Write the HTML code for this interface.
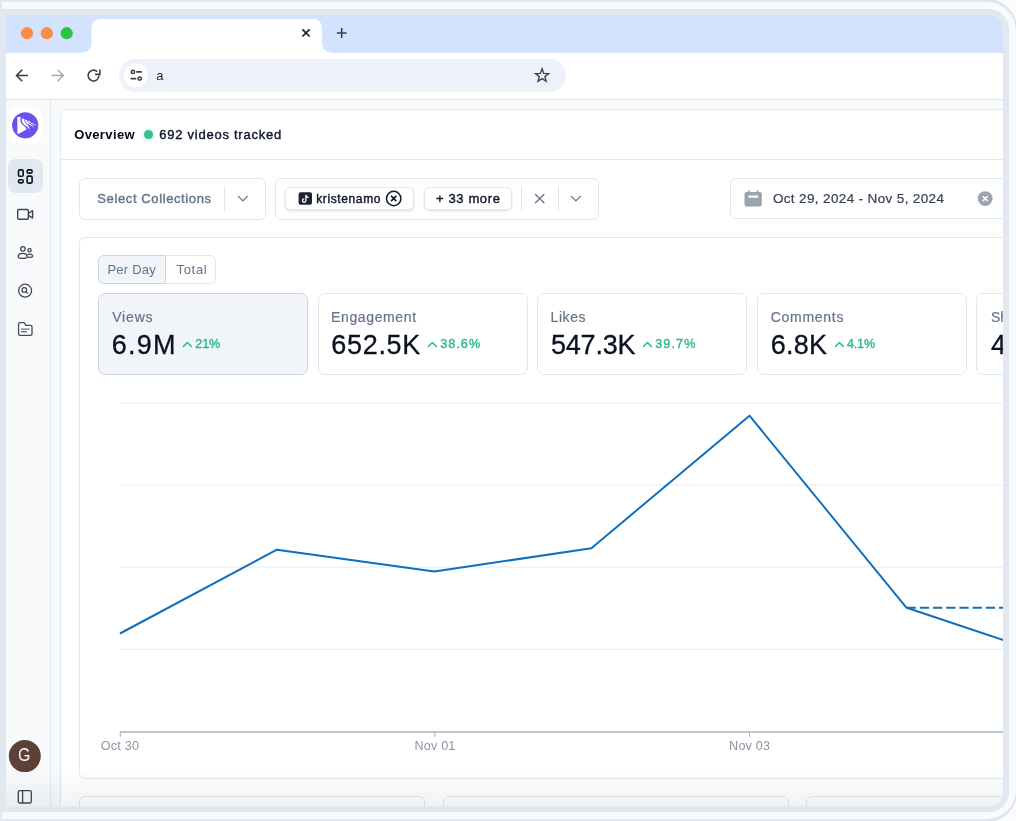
<!DOCTYPE html>
<html lang="en">
<head>
<meta charset="utf-8">
<title>Overview</title>
<style>
*{box-sizing:border-box;margin:0;padding:0}
html,body{width:1016px;height:821px;overflow:hidden;background:#fafbfc}
body{font-family:"Liberation Sans",Arial,sans-serif;position:relative;color:#0f172a}
.abs{position:absolute}
.t{position:absolute;white-space:nowrap;line-height:1}
#outer{position:absolute;left:0;top:0;width:1016px;height:821px;background:#f8fafc;border:2px solid #e2e8f0;border-right:0;border-radius:0 30px 30px 0;box-shadow:0 0 0 1px rgba(148,163,184,.35)}
#frame{position:absolute;left:0;top:9px;width:1009px;height:803px;background:#e2e8f0;border-radius:0 20px 20px 0}
#win{position:absolute;left:6px;top:15px;width:997px;height:791px;background:#f8fafc;border-radius:0 14px 14px 0;overflow:hidden}
/* everything inside #win positioned relative to page by offsetting */
#page{position:absolute;left:-6px;top:-15px;width:1016px;height:821px;will-change:transform}
#tabstrip{left:6px;top:15px;width:997px;height:37.5px;background:#d3e3fd}
#toolbar{left:6px;top:52.5px;width:997px;height:47.5px;background:#fff;border-bottom:1.5px solid #dcdfe4}
#pill{left:119.3px;top:58.6px;width:446.8px;height:33.4px;border-radius:17px;background:#edf1f9}
#sidebar{left:6px;top:100px;width:45px;height:706px;background:#f8fafc;border-right:1px solid #e2e8f0}
#main{left:60px;top:109px;width:960px;height:720px;background:#fff;border:1px solid #e2e8f0;border-radius:7px 0 0 0}
.box{position:absolute;background:#fff;border:1px solid #e2e8f0;border-radius:6px}
.chip{position:absolute;background:#fff;border:1px solid #e2e8f0;border-radius:5px;box-shadow:0 1px 2.5px rgba(15,23,42,.14)}
.vdiv{position:absolute;width:1px;background:#e2e8f0}
.card{position:absolute;top:293.3px;width:210.2px;height:81.4px;background:#fff;border:1px solid #e2e8f0;border-radius:7px}
.lab{font-size:14px;color:#64748b;-webkit-text-stroke:.2px currentColor}
.num{font-size:27px;color:#0b1120;-webkit-text-stroke:.3px currentColor}
.med{-webkit-text-stroke:.4px currentColor}
.pct{font-size:12.6px;color:#2fb984;-webkit-text-stroke:.38px currentColor}
</style>
</head>
<body>
<div id="outer"></div>
<div id="frame"></div>
<div id="win"><div id="page">

<!-- browser chrome -->
<div id="tabstrip" class="abs"></div>
<div id="toolbar" class="abs"></div>
<div id="pill" class="abs"></div>

<svg class="abs" style="left:0;top:0" width="1016" height="821" viewBox="0 0 1016 821" fill="none">
  <!-- tab -->
  <path d="M81.5 53 L81.5 52.5 Q91.5 52.5 91.5 42.5 L91.5 28.5 Q91.5 19 101 19 L312.5 19 Q322 19 322 28.5 L322 42.5 Q322 52.5 332.5 52.5 L332.5 53 Z" fill="#fff"/>
  <circle cx="27" cy="33.2" r="6.1" fill="#fb8c46"/>
  <circle cx="46.9" cy="33.2" r="6.1" fill="#fb8c46"/>
  <circle cx="66.7" cy="33.2" r="6.1" fill="#29c440"/>
  <!-- tab close / new tab -->
  <path d="M302.4 29.3 L309.6 36.5 M309.6 29.3 L302.4 36.5" stroke="#1f1f1f" stroke-width="1.7"/>
  <path d="M336.8 33 H346.6 M341.7 28.1 V37.9" stroke="#3c4043" stroke-width="1.6"/>
  <!-- back -->
  <path d="M28 75.5 H17.2 M22.2 69.8 L16.5 75.5 L22.2 81.2" stroke="#3c4043" stroke-width="1.6" stroke-linejoin="miter"/>
  <!-- forward -->
  <path d="M51.6 75.5 H62.6 M57.6 69.8 L63.3 75.5 L57.6 81.2" stroke="#a3a9b0" stroke-width="1.5"/>
  <!-- reload -->
  <path d="M98.9 75.6 A5.4 5.4 0 1 1 97.2 71.6" stroke="#3c4043" stroke-width="1.6"/>
  <path d="M99.9 69.6 V74.4 H95.1" stroke="#3c4043" stroke-width="1.6"/>
  <!-- site info -->
  <circle cx="135.9" cy="75.4" r="12" fill="#fff"/>
  <circle cx="132.9" cy="71.9" r="1.65" stroke="#3c4043" stroke-width="1.6"/>
  <path d="M136.2 71.9 H141.8 M130.6 78.6 H136.3" stroke="#3c4043" stroke-width="1.7"/>
  <circle cx="139.7" cy="78.6" r="1.65" stroke="#3c4043" stroke-width="1.6"/>
  <!-- star -->
  <path d="M542.1 68.8 L543.8 73.4 L548.7 73.6 L544.9 76.6 L546.2 81.3 L542.1 78.6 L538.0 81.3 L539.3 76.6 L535.5 73.6 L540.4 73.4 Z" stroke="#3c4043" stroke-width="1.35" stroke-linejoin="miter"/>
</svg>
<div class="t" style="left:156.2px;top:69px;font-size:13px;color:#1f1f1f">a</div>

<!-- app -->
<div id="sidebar" class="abs"></div>

<div class="abs" style="left:8px;top:108px;width:35px;height:35px;background:#fff;border-radius:9px"></div>
<div class="abs" style="left:8px;top:159px;width:35px;height:34px;background:#e2e8f0;border-radius:8px"></div>
<svg class="abs" style="left:0;top:0" width="60" height="821" viewBox="0 0 60 821" fill="none">
  <!-- logo -->
  <circle cx="25.2" cy="125.3" r="13.1" fill="#6a53ec"/>
  <path d="M17.4 117 L20.8 117 C19.6 120.4 20.6 123.4 23.2 125.2 L26.1 127.9 C26.7 128.5 26.6 129.3 26 129.7 L18.3 134.1 L17.4 133.7 Z" fill="#fff"/>
  <g fill="#fff">
    <path d="M22 118.4 C21.2 121.6 23.2 124.2 26 125.9 C27.8 127 28.8 128.2 29.3 129.9 C29.8 128 29 126.2 27.4 125 C25.2 123.4 23.8 121.4 24.3 119 Z"/>
    <path d="M25 119.4 C24.6 121.8 26.6 123.6 29.4 124.8 C31.4 125.7 32.8 126.4 33.9 127.6 C33.6 126 32.4 125 30.6 124.2 C28.4 123.2 27 122 27.1 120.2 Z"/>
    <path d="M27.8 120.5 C27.8 122.2 29.6 123.2 32 123.9 C34 124.5 35.4 124.9 36.6 125.8 C36 124.6 34.8 124 33 123.4 C31 122.8 29.6 122.2 29.4 121 Z"/>
  </g>
  <!-- dashboard -->
  <g stroke="#0b1120" stroke-width="1.6">
    <rect x="18.5" y="169.9" width="4.7" height="6.3" rx="1.3"/>
    <rect x="18.5" y="179.7" width="4.7" height="3.2" rx="1.3"/>
    <rect x="27.1" y="169.9" width="5" height="3.2" rx="1.3"/>
    <rect x="27.1" y="176.1" width="5" height="7" rx="1.3"/>
  </g>
  <!-- video -->
  <g stroke="#404650" stroke-width="1.4" stroke-linejoin="round">
    <rect x="17.7" y="209.5" width="10.6" height="9.7" rx=".9"/>
    <path d="M28.5 213.4 L32.6 210.7 V218.1 L28.5 215.4"/>
  </g>
  <!-- users -->
  <g stroke="#404650" stroke-width="1.3">
    <circle cx="22.9" cy="248.8" r="2.25"/>
    <path d="M18.2 256.8 C18.2 252.1 27.2 252.1 27.2 256.8 C27.2 259 18.2 259 18.2 256.8 Z"/>
    <circle cx="29.5" cy="250.3" r="1.65"/>
    <path d="M27.7 254.6 C29.5 253.5 32.6 254.2 32.6 256.2 C32.6 257.6 29.2 257.5 27.7 257.2"/>
  </g>
  <!-- search circle -->
  <g stroke="#404650" stroke-width="1.25">
    <circle cx="25.1" cy="290.7" r="6.5"/>
    <circle cx="24.3" cy="289.9" r="2.3"/>
    <path d="M26 291.6 L28 293.6"/>
  </g>
  <!-- folder -->
  <g stroke="#454b55" stroke-width="1.3" stroke-linejoin="round">
    <path d="M18.6 334.1 V323.9 Q18.6 322.6 19.9 322.6 H23.6 Q24.4 322.6 24.8 323.4 L25.7 325.4 H30.7 Q32 325.4 32 326.7 V334.1 Q32 335.4 30.7 335.4 H19.9 Q18.6 335.4 18.6 334.1 Z" fill="#fff"/>
    <path d="M21 329.1 H29.6 M21 331.7 H26.8" stroke-width="1.4" stroke="#6b7280"/>
  </g>
  <!-- avatar -->
  <circle cx="24.8" cy="756.1" r="16" fill="#5d4037"/>
  <!-- panel icon -->
  <g stroke="#404650" stroke-width="1.3">
    <rect x="18.3" y="790.6" width="13" height="12.4" rx="1.6"/>
    <path d="M22.6 790.6 V803"/>
  </g>
</svg>
<div class="t" style="left:18px;top:747.4px;font-size:17.5px;color:#fff;transform:scaleX(.9);transform-origin:0 0">G</div>
<div id="main" class="abs"></div>

<!-- header -->
<div class="abs" style="left:61px;top:159px;width:960px;height:1px;background:#e2e8f0"></div>
<div class="t" id="t1" style="color:#020617;left:74.20px;top:128.00px;font-size:13px;font-weight:bold;letter-spacing:0.37px">Overview</div>
<div class="abs" style="left:141.4px;top:127.5px;width:14px;height:14px;border-radius:50%;background:#f1f5f9"></div>
<div class="abs" style="left:144.1px;top:130.2px;width:8.6px;height:8.6px;border-radius:50%;background:#3ac08a"></div>
<div class="t med" id="t2" style="left:159.26px;top:128.00px;font-size:13px;letter-spacing:0.75px">692 videos tracked</div>

<!-- filters -->
<div class="box" style="left:79px;top:178px;width:187px;height:42px"></div>
<div class="t med" id="t3" style="left:97.32px;top:191.50px;font-size:13px;color:#64748b;letter-spacing:0.61px">Select Collections</div>
<div class="vdiv" style="left:224px;top:186.3px;height:24.7px"></div>
<div class="box" style="left:274.5px;top:178px;width:324.5px;height:42px"></div>
<div class="chip" style="left:284.5px;top:187.1px;width:129.5px;height:22.8px"></div>
<div class="t med" id="t4" style="left:316.24px;top:192.50px;font-size:12px;color:#0f172a;letter-spacing:0.61px">kristenamo</div>
<div class="chip" style="left:423.5px;top:187.1px;width:88.5px;height:22.8px"></div>
<div class="t med" id="t5" style="left:435.92px;top:191.50px;font-size:13px;color:#0f172a;letter-spacing:0.64px">+ 33 more</div>
<div class="vdiv" style="left:521px;top:186.3px;height:24.7px"></div>
<div class="vdiv" style="left:557.5px;top:186.3px;height:24.7px"></div>
<div class="box" style="left:730px;top:178px;width:300px;height:41px"></div>
<div class="t" id="t6" style="-webkit-text-stroke:.2px currentColor;left:772.89px;top:192.10px;font-size:13.5px;color:#374151;letter-spacing:0.36px">Oct 29, 2024 - Nov 5, 2024</div>

<!-- chart panel -->
<div class="box" style="left:79px;top:237px;width:960px;height:541.5px"></div>
<div class="abs" style="left:166px;top:255px;width:50px;height:29px;background:#fff;border:1px solid #e2e8f0;border-left:0;border-radius:0 6px 6px 0"></div>
<div class="abs" style="left:98px;top:255px;width:68.2px;height:29px;background:#f1f5f9;border:1px solid #cbd5e1;border-radius:6px 0 0 6px"></div>
<div class="t" id="t7" style="left:107.43px;top:263.00px;font-size:13px;color:#64748b;letter-spacing:0.23px">Per Day</div>
<div class="t" id="t8" style="left:176.56px;top:263.00px;font-size:13px;color:#64748b;letter-spacing:0.67px">Total</div>

<div class="card" style="left:98.2px;background:#f1f5f9;border-color:#cbd5e1"></div>
<div class="card" style="left:317.7px"></div>
<div class="card" style="left:537.1px"></div>
<div class="card" style="left:756.8px"></div>
<div class="card" style="left:976.3px"></div>

<div class="t lab" id="l1" style="left:112.17px;top:310.00px;letter-spacing:0.83px">Views</div>
<div class="t num" id="n1" style="left:111.83px;top:331.5px;letter-spacing:1.22px">6.9M</div>
<div class="t pct" id="p1" style="left:195.23px;top:338.40px;letter-spacing:-0.07px">21%</div>

<div class="t lab" id="l2" style="left:331.00px;top:310.00px;letter-spacing:0.63px">Engagement</div>
<div class="t num" id="n2" style="left:331.20px;top:331.5px;letter-spacing:0.72px">652.5K</div>
<div class="t pct" id="p2" style="left:440.31px;top:338.40px;letter-spacing:1.02px">38.6%</div>

<div class="t lab" id="l3" style="left:550.53px;top:310.00px;letter-spacing:0.60px">Likes</div>
<div class="t num" id="n3" style="left:551.01px;top:331.5px;letter-spacing:-0.21px">547.3K</div>
<div class="t pct" id="p3" style="left:655.16px;top:338.40px;letter-spacing:1.15px">39.7%</div>

<div class="t lab" id="l4" style="left:770.75px;top:310.00px;letter-spacing:0.71px">Comments</div>
<div class="t num" id="n4" style="left:770.83px;top:331.5px;letter-spacing:0.21px">6.8K</div>
<div class="t pct" id="p4" style="left:846.95px;top:338.40px;letter-spacing:-0.17px">4.1%</div>

<div class="t lab" id="l5" style="left:991px;top:310px">Shares</div>
<div class="t num" id="n5" style="left:991px;top:331.5px">43.2K</div>


<!-- small icons -->
<svg class="abs" style="left:0;top:0" width="1016" height="400" viewBox="0 0 1016 400" fill="none">
  <g stroke="#64748b" stroke-width="1.3" stroke-linecap="round" stroke-linejoin="round">
    <path d="M238.3 196.4 L242.8 200.9 L247.3 196.4"/>
    <path d="M571.4 196.4 L575.9 200.9 L580.4 196.4"/>
    <path d="M535.5 194.5 L543.9 202.8 M543.9 194.5 L535.5 202.8"/>
  </g>
  <!-- tiktok -->
  <rect x="298.6" y="192.3" width="13.4" height="12.5" rx="2" fill="#1e2330"/>
  <path d="M305.9 194.8 V200.6 A1.7 1.7 0 1 1 304.2 198.9 M305.9 194.8 C306.1 196.4 307.1 197.2 308.6 197.3" stroke="#fff" stroke-width="1.3"/>
  <!-- chip remove -->
  <circle cx="393.7" cy="198.5" r="7.2" stroke="#111827" stroke-width="1.5"/>
  <path d="M391.1 195.9 L396.3 201.1 M396.3 195.9 L391.1 201.1" stroke="#111827" stroke-width="1.6"/>
  <!-- calendar -->
  <path d="M747.9 190.4 h1.8 v1.5 h7 v-1.5 h1.8 v1.5 h1.3 a2 2 0 0 1 2 2 v10.7 a2 2 0 0 1 -2 2 h-13.3 a2 2 0 0 1 -2 -2 v-10.7 a2 2 0 0 1 2 -2 h1.4 z" fill="#9ca3af"/>
  <rect x="748.3" y="195.6" width="9.8" height="2.1" rx=".6" fill="#fff"/>
  <!-- clear -->
  <circle cx="985.2" cy="198.6" r="7.4" fill="#9ca3af"/>
  <path d="M983.2 196.6 L987.2 200.6 M987.2 196.6 L983.2 200.6" stroke="#fff" stroke-width="1.5" stroke-linecap="round"/>
  <!-- trend chevrons -->
  <g stroke="#3bbf8a" stroke-width="1.6" stroke-linecap="round" stroke-linejoin="round">
    <path d="M183.5 346.4 L187.4 342.5 L191.3 346.4"/>
    <path d="M428.5 346.4 L432.4 342.5 L436.3 346.4"/>
    <path d="M643.5 346.4 L647.4 342.5 L651.3 346.4"/>
    <path d="M835.5 346.4 L839.4 342.5 L843.3 346.4"/>
  </g>
</svg>

<!-- chart -->
<svg class="abs" style="left:0;top:0" width="1016" height="821" viewBox="0 0 1016 821" fill="none">
  <g stroke="#e6ebf2" stroke-width="1">
    <path d="M120 403.2 H1016 M120 485.1 H1016 M120 567.1 H1016 M120 649.2 H1016"/>
  </g>
  <path d="M119.8 731.9 H1016" stroke="#a7b2c2" stroke-width="1.5"/>
  <path d="M120.3 732 V736.7 M434.8 732 V736.7 M749.5 732 V736.7" stroke="#a7b2c2" stroke-width="1.1"/>
  <path d="M906.6 607.8 H1016" stroke="#0d6fbe" stroke-width="2" stroke-dasharray="9.3 3.9"/>
  <path d="M120 633.5 L276.9 549.7 L434.3 571.6 L591.4 548.2 L749.5 415.7 L906.6 607.8 L1063.7 660.2" stroke="#0d6fbe" stroke-width="2" stroke-linejoin="round"/>
  <g font-family="Liberation Sans, Arial, sans-serif" font-size="12.6" letter-spacing=".22" fill="#8994a5" text-anchor="middle">
    <text x="120" y="750.1">Oct 30</text>
    <text x="435" y="750.1">Nov 01</text>
    <text x="749.7" y="750.1">Nov 03</text>
  </g>
</svg>

<!-- lower cards -->
<div class="box" style="left:79px;top:795.5px;width:346px;height:60px"></div>
<div class="box" style="left:443px;top:795.5px;width:345.5px;height:60px"></div>
<div class="box" style="left:806px;top:795.5px;width:346px;height:60px"></div>
<div class="abs" style="left:6px;top:766px;width:997px;height:40px;background:linear-gradient(to bottom,rgba(15,23,42,0),rgba(15,23,42,.055))"></div>

</div></div>
</body>
</html>
